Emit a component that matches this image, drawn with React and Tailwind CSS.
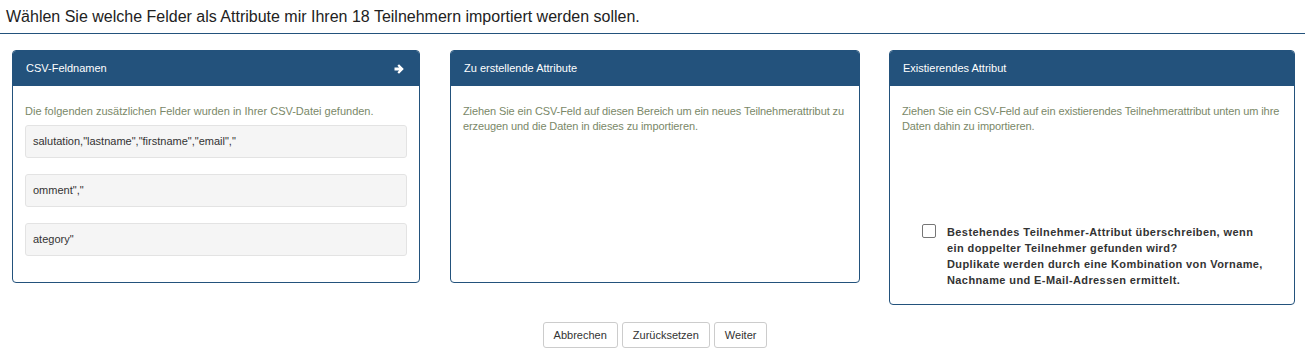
import React from "react";

function Arrow() {
  return (
    <svg width="11" height="10" viewBox="0 0 11 10" className="block">
      <path d="M0.5 3.6 H5.2 L3.4 1.8 L5 0.3 L9.8 5 L5 9.7 L3.4 8.2 L5.2 6.4 H0.5 Z" fill="#ffffff" />
    </svg>
  );
}

function Panel({ title, icon, width, className, children }) {
  return (
    <div className={`${width} ${className} border border-[#23527c] rounded-[4px] bg-white overflow-hidden`}>
      <div className="h-[35px] bg-[#23527c] flex items-center justify-between pl-[13px] pr-[14px] text-white text-[11px]">
        <span>{title}</span>
        {icon}
      </div>
      {children}
    </div>
  );
}

export default function App() {
  const fields = ['salutation,"lastname","firstname","email","', 'omment","', 'ategory"'];
  return (
    <div className="w-[1305px] h-[353px] bg-white font-['Liberation_Sans',Arial,sans-serif] text-[#333]">
      <div className="h-[34px] border-b border-[#23527c] pl-[6px] pt-[6px] text-[16px] leading-[22px] text-[#222]">
        Wählen Sie welche Felder als Attribute mir Ihren 18 Teilnehmern importiert werden sollen.
      </div>
      <div className="flex items-start mt-[16px]">
        <Panel title="CSV-Feldnamen" icon={<Arrow />} width="w-[408px]" className="ml-[12px] h-[233px]">
          <div className="px-[12px] pt-[18px]">
            <p className="text-[11px] leading-[15px] text-[#7a8868]">
              Die folgenden zusätzlichen Felder wurden in Ihrer CSV-Datei gefunden.
            </p>
            <div className="flex flex-col gap-[16px] mt-[6px]">
              {fields.map((f) => (
                <div key={f} className="h-[33px] bg-[#f5f5f5] border border-[#e3e3e3] rounded-[3px] flex items-center pl-[7px] text-[11px] text-[#333]">
                  {f}
                </div>
              ))}
            </div>
          </div>
        </Panel>
        <Panel title="Zu erstellende Attribute" width="w-[410px]" className="ml-[30px] h-[233px]">
          <div className="pl-[12px] pr-[8px] pt-[18px]">
            <p className="text-[11px] leading-[15px] tracking-[-0.1px] text-[#7a8868]">
              Ziehen Sie ein CSV-Feld auf diesen Bereich um ein neues Teilnehmerattribut zu erzeugen und die Daten in dieses zu importieren.
            </p>
          </div>
        </Panel>
        <Panel title="Existierendes Attribut" width="w-[406px]" className="ml-[29px] h-[255px]">
          <div className="pl-[12px] pr-[8px] pt-[18px]">
            <p className="text-[11px] leading-[15px] tracking-[-0.1px] text-[#7a8868]">
              Ziehen Sie ein CSV-Feld auf ein existierendes Teilnehmerattribut unten um ihre Daten dahin zu importieren.
            </p>
            <div className="flex mt-[89px] pl-[20px]">
              <div className="w-[14px] h-[14px] border border-[#767676] rounded-[2px] bg-white mt-[1px] shrink-0" />
              <div className="ml-[11px] text-[11px] font-bold leading-[16px] tracking-[0.4px] text-[#333] mt-[1px]">
                Bestehendes Teilnehmer-Attribut überschreiben, wenn
                <br />
                ein doppelter Teilnehmer gefunden wird?
                <br />
                Duplikate werden durch eine Kombination von Vorname,
                <br />
                Nachname und E-Mail-Adressen ermittelt.
              </div>
            </div>
          </div>
        </Panel>
      </div>
      <div className="flex justify-center gap-[4px] mt-[17px] pl-[5px]">
        {["Abbrechen", "Zurücksetzen", "Weiter"].map((b) => (
          <button key={b} className="h-[26px] px-[10px] border border-[#ccc] rounded-[3px] bg-white text-[11px] text-[#333]">
            {b}
          </button>
        ))}
      </div>
    </div>
  );
}
